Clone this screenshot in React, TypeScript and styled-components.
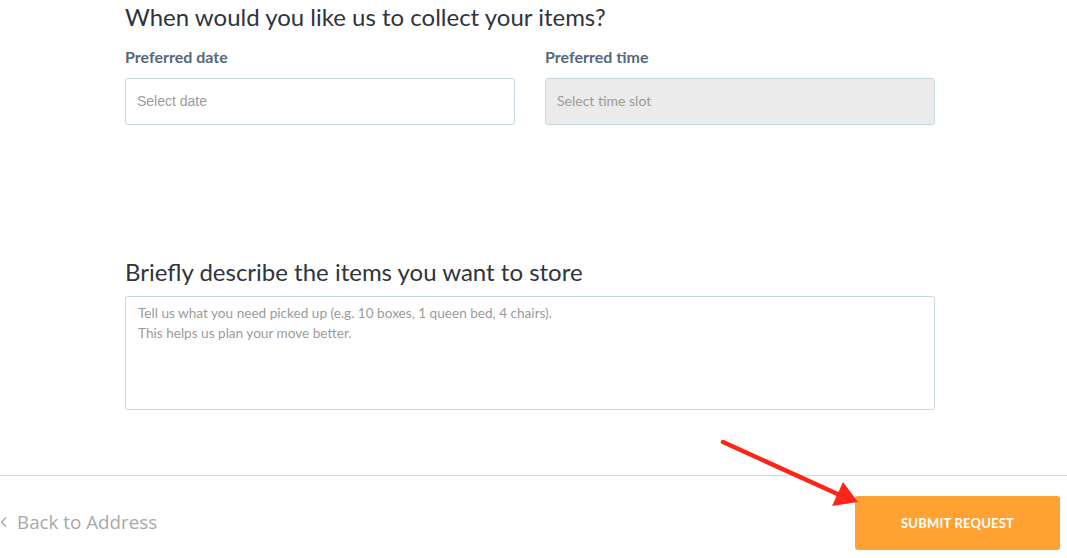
import React from 'react';
import styled, { createGlobalStyle } from 'styled-components';

const GlobalStyle = createGlobalStyle`
  html, body {
    margin: 0;
    padding: 0;
    background: #ffffff;
    font-family: Lato, "Open Sans", sans-serif;
  }
  * {
    box-sizing: border-box;
  }
`;

const Page = styled.div`
  position: relative;
  width: 1067px;
  height: 558px;
  overflow: hidden;
  display: flex;
  flex-direction: column;
`;

const Content = styled.div`
  width: 810px;
  margin-left: 125px;
  display: flex;
  flex-direction: column;
`;

const Section = styled.section<{ $top?: number }>`
  display: flex;
  flex-direction: column;
  margin-top: ${({ $top }) => $top ?? 0}px;
`;

const Heading = styled.h2`
  margin: 0;
  font-family: Lato, "Open Sans", sans-serif;
  font-weight: 400;
  font-size: 24px;
  line-height: 34px;
  color: #2f3440;
`;

const FieldRow = styled.div`
  display: grid;
  grid-template-columns: 1fr 1fr;
  gap: 30px;
  margin-top: 12px;
`;

const Field = styled.div`
  display: flex;
  flex-direction: column;
`;

const Label = styled.label`
  font-family: Lato, sans-serif;
  font-weight: 700;
  font-size: 16px;
  line-height: 22px;
  color: #566879;
  margin-bottom: 10px;
`;

const Input = styled.div<{ $disabled?: boolean; $font?: string }>`
  height: 47px;
  border: 1px solid #c9d7e1;
  border-radius: 3px;
  background: ${({ $disabled }) => ($disabled ? '#ebebeb' : '#ffffff')};
  display: flex;
  align-items: center;
  padding: 0 11px 2px;
  font-family: ${({ $font }) => $font ?? 'Lato, sans-serif'};
  font-size: 14px;
  color: #9b9b9b;
`;

const TextArea = styled.div`
  margin-top: 7px;
  height: 114px;
  border: 1px solid #c9d7e1;
  border-radius: 3px;
  padding: 6px 12px;
  font-family: Lato, sans-serif;
  font-size: 13.6px;
  line-height: 20px;
  color: #9b9b9b;
`;

const Footer = styled.footer`
  margin-top: 65px;
  border-top: 1px solid #cfd9e1;
  display: flex;
  align-items: center;
  justify-content: space-between;
  padding: 20px 7px 0 0;
`;

const BackLink = styled.a`
  display: flex;
  align-items: center;
  gap: 9px;
  margin-top: -3px;
  font-family: "Open Sans", sans-serif;
  font-size: 18.8px;
  color: #a8a8a8;
  text-decoration: none;
`;

const SubmitButton = styled.button`
  width: 205px;
  height: 54px;
  border: none;
  border-radius: 3px;
  background: #ffa233;
  color: #ffffff;
  font-family: Lato, sans-serif;
  font-weight: 700;
  font-size: 13px;
  letter-spacing: 0.2px;
  text-transform: uppercase;
`;

const ArrowOverlay = styled.svg`
  position: absolute;
  left: 0;
  top: 0;
  pointer-events: none;
`;

export default function App() {
  return (
    <Page>
      <GlobalStyle />
      <Content>
        <Section>
          <Heading>When would you like us to collect your items?</Heading>
          <FieldRow>
            <Field>
              <Label>Preferred date</Label>
              <Input $font='"Liberation Sans", Arial, sans-serif'>Select date</Input>
            </Field>
            <Field>
              <Label>Preferred time</Label>
              <Input $disabled>Select time slot</Input>
            </Field>
          </FieldRow>
        </Section>
        <Section $top={130}>
          <Heading>Briefly describe the items you want to store</Heading>
          <TextArea>
            Tell us what you need picked up (e.g. 10 boxes, 1 queen bed, 4 chairs).
            <br />
            This helps us plan your move better.
          </TextArea>
        </Section>
      </Content>
      <Footer>
        <BackLink href="#">
          <svg width="8" height="12" viewBox="0 0 8 12">
            <path d="M6 1.5 L1.5 6 L6 10.5" fill="none" stroke="#a8a8a8" strokeWidth="1.4" />
          </svg>
          Back to Address
        </BackLink>
        <SubmitButton>Submit Request</SubmitButton>
      </Footer>
      <ArrowOverlay width="1067" height="558" viewBox="0 0 1067 558">
        <line x1="723" y1="442" x2="842" y2="496" stroke="#ff2418" strokeWidth="4.5" strokeLinecap="round" />
        <polygon points="858,502 832,506 843,482" fill="#ff2418" />
      </ArrowOverlay>
    </Page>
  );
}
